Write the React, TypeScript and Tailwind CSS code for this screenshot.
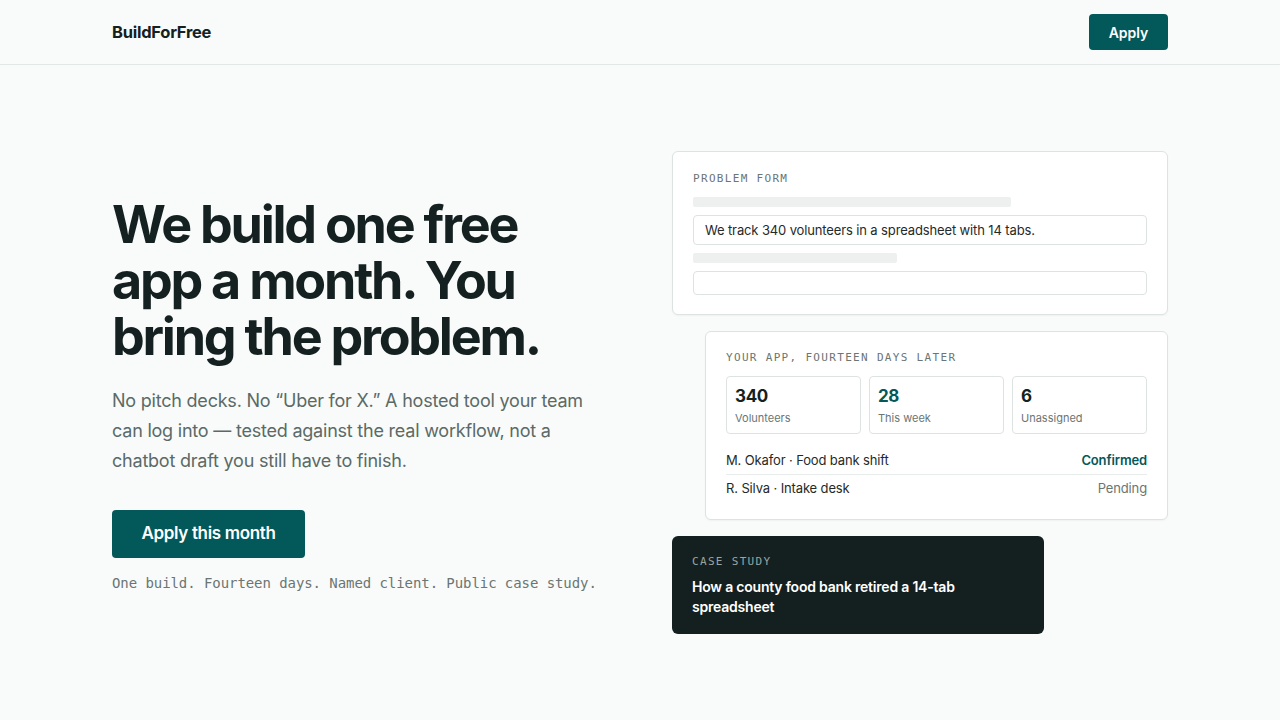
import React from "react";

const sans = { fontFamily: "Inter, 'Noto Sans', sans-serif" };
const mono = { fontFamily: "'DejaVu Sans Mono', 'Liberation Mono', monospace" };

export default function App() {
  return (
    <div className="min-h-screen bg-[#f9fbfa] text-[#142120]" style={sans}>
      <header className="h-[65px] border-b border-[#e3e7e6]">
        <div className="mx-auto flex h-16 w-[1056px] items-center justify-between">
          <div className="text-[16.5px] font-bold tracking-[-0.015em] text-[#142120]">BuildForFree</div>
          <button className="h-9 w-[79px] rounded-[4px] bg-[#03585a] text-[14px] font-semibold text-white">Apply</button>
        </div>
      </header>
      <main className="mx-auto grid min-h-[655px] w-[1056px] grid-cols-2 items-center gap-16">
        <div className="pt-[5px]">
          <h1 className="text-[52px] font-bold leading-[56px] tracking-[-0.043em] text-[#142120]">
            We build one free app a month. You bring the problem.
          </h1>
          <p className="mt-[21px] w-[500px] text-[18px] leading-[30px] tracking-[-0.012em] text-[#5b6a67]">
            No pitch decks. No “Uber for X.” A hosted tool your team can log into — tested against the real workflow, not a chatbot draft you still have to finish.
          </p>
          <button className="mt-[34px] h-12 w-[193px] rounded-[4px] bg-[#03585a] text-[17px] font-semibold tracking-[-0.02em] text-white">
            Apply this month
          </button>
          <div className="mt-[15px] whitespace-nowrap text-[14px] tracking-[-0.005em] text-[#6b7573]" style={mono}>
            One build. Fourteen days. Named client. Public case study.
          </div>
        </div>
        <div className="flex flex-col gap-4">
          <div className="rounded-[6px] border border-[#dde3e1] bg-white px-5 pb-[19px] pt-[20px] shadow-[0_1px_2px_rgba(0,0,0,0.04)]">
            <div className="text-[11px] leading-[14px] tracking-[0.12em] text-[#6b7573]" style={mono}>PROBLEM FORM</div>
            <div className="mt-[11px] h-[10px] w-[318px] rounded-[2px] bg-[#eef0ef]"></div>
            <div className="mt-2 flex h-[30px] items-center rounded-[4px] border border-[#dde3e1] px-[11px] pt-[2px] text-[13px] tracking-[-0.01em] text-[#1f2a29]">
              We track 340 volunteers in a spreadsheet with 14 tabs.
            </div>
            <div className="mt-2 h-[10px] w-[204px] rounded-[2px] bg-[#eef0ef]"></div>
            <div className="mt-2 h-6 rounded-[4px] border border-[#dde3e1]"></div>
          </div>
          <div className="ml-[33px] rounded-[6px] border border-[#dde3e1] bg-white px-5 pb-[22px] pt-[19px] shadow-[0_1px_2px_rgba(0,0,0,0.04)]">
            <div className="text-[11px] leading-[14px] tracking-[0.12em] text-[#6b7573]" style={mono}>YOUR APP, FOURTEEN DAYS LATER</div>
            <div className="mt-[11px] grid grid-cols-3 gap-2">
              {[
                { n: "340", l: "Volunteers", c: "text-[#142120]" },
                { n: "28", l: "This week", c: "text-[#03585a]" },
                { n: "6", l: "Unassigned", c: "text-[#142120]" },
              ].map((s) => (
                <div key={s.l} className="h-[58px] rounded-[4px] border border-[#dde3e1] px-2 pt-[8px]">
                  <div className={`text-[17px] font-bold leading-[22px] tracking-[-0.02em] ${s.c}`}>{s.n}</div>
                  <div className="mt-[4px] text-[11px] leading-[14px] text-[#6b7573]">{s.l}</div>
                </div>
              ))}
            </div>
            <div className="mt-[17px] flex items-center justify-between border-b border-[#e8ecea] pb-[5px] text-[13px] leading-[18px] tracking-[-0.01em]">
              <span className="text-[#1f2a29]">M. Okafor · Food bank shift</span>
              <span className="font-semibold text-[#03585a]">Confirmed</span>
            </div>
            <div className="flex items-center justify-between pt-[4px] text-[13px] leading-[18px] tracking-[-0.01em]">
              <span className="text-[#1f2a29]">R. Silva · Intake desk</span>
              <span className="text-[#6b7573]">Pending</span>
            </div>
          </div>
          <div className="w-[372px] rounded-[6px] bg-[#142020] px-5 pb-[17px] pt-[19px]">
            <div className="text-[11px] leading-[14px] tracking-[0.12em] text-[#9aa5a3]" style={mono}>CASE STUDY</div>
            <div className="mt-[8px] text-[14px] font-semibold leading-[20px] tracking-[-0.015em] text-white">
              How a county food bank retired a 14-tab spreadsheet
            </div>
          </div>
        </div>
      </main>
    </div>
  );
}
